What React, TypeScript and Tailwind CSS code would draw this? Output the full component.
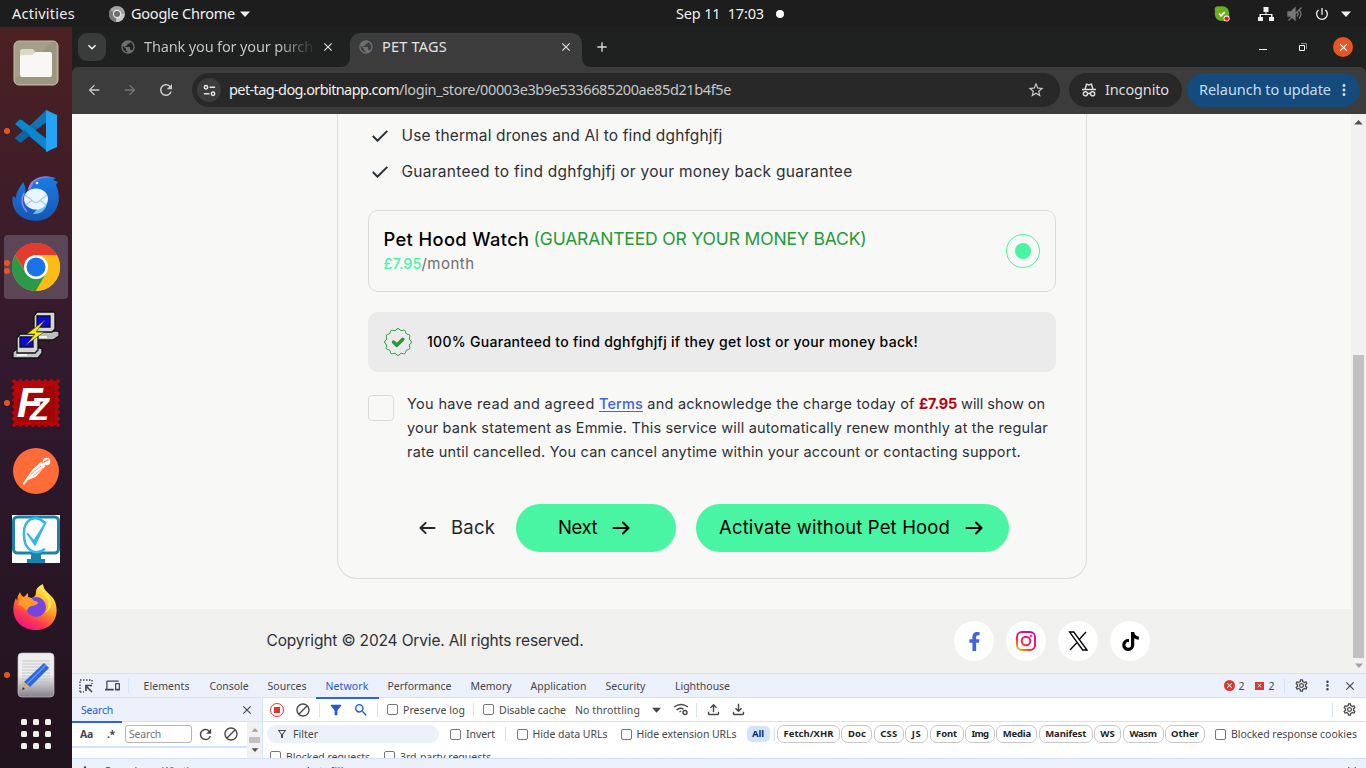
import React, { useLayoutEffect, useRef } from "react";
import { MdArrowBack, MdArrowForward, MdRefresh, MdStarBorder, MdFilterAlt, MdOutlineFilterAlt, MdSearch, MdOutlineSettings, MdMoreVert, MdClose, MdDoNotDisturb, MdKeyboardArrowDown, MdAdd, MdPublic, MdOutlineFileUpload, MdOutlineFileDownload, MdPowerSettingsNew, MdDevices } from "react-icons/md";
import { FaFacebookF, FaTiktok } from "react-icons/fa";

/** Single-line text whose tracking is adjusted so that it fills a given width. */
function Fit({ w, className = "", children }: { w: number; className?: string; children: React.ReactNode }) {
  const ref = useRef<HTMLSpanElement>(null);
  useLayoutEffect(() => {
    const el = ref.current;
    if (!el) return;
    el.style.letterSpacing = "0px";
    const n = (el.textContent || "").length;
    const natural = el.getBoundingClientRect().width;
    el.style.letterSpacing = `${(w - natural) / n}px`;
  }, [w]);
  return (
    <span className={`block shrink-0 whitespace-nowrap ${className}`} style={{ width: w }}>
      <span ref={ref} className="inline-block whitespace-pre">{children}</span>
    </span>
  );
}

function Caret({ className }: { className: string }) {
  return <svg viewBox="0 0 10 6" className={className}><path d="M0 .5h10L5 6z" fill="currentColor" /></svg>;
}

function TopBar() {
  return (
    <header className="flex h-[27px] shrink-0 items-center bg-[#1d1d1d] text-[14.5px] text-[#f0f0f0]">
      <Fit w={63} className="ml-3">Activities</Fit>
      <svg viewBox="0 0 16 16" className="ml-[34px] size-4">
        <circle cx="8" cy="8" r="8" fill="#a5a5a5" />
        <path d="M8 8 1 4a8 8 0 0 0 6 12z" fill="#777" />
        <path d="M8 8h7.5A8 8 0 0 1 7 16z" fill="#c9c9c9" />
        <circle cx="8" cy="8" r="4.2" fill="#e8e8e8" /><circle cx="8" cy="8" r="3" fill="#6b6b6b" />
      </svg>
      <Fit w={104} className="ml-[6px]">Google Chrome</Fit>
      <Caret className="ml-[5px] h-[6px] w-[10px]" />
      <Fit w={88} className="ml-[426px]">Sep 11  17:03</Fit>
      <span className="ml-[12px] size-2 rounded-full bg-white" />
      <svg viewBox="0 0 16 16" className="ml-[430px] size-4">
        <path d="M1 5C-.5 1 3-.5 6 .6c6-1.6 10 3 9 8 1.6 4-2 7.500-6 6.200C3 15.500 0 11 1 5z" fill="#6aae1c" />
        <path d="m5 7.500 2 2.200 3.800-3.500" stroke="#fff" strokeWidth="1.700" fill="none" />
        <circle cx="12.600" cy="12.600" r="3" fill="#fff" /><circle cx="12.600" cy="12.600" r="2.200" fill="#e01b24" />
      </svg>
      <svg viewBox="0 0 16 14" className="ml-[28px] h-[14px] w-4" fill="#f2f2f2">
        <path d="M5.500 0h5v5h-2v2h6v3H16v4h-5v-4h2V8H3v2h2v4H0v-4h1.500V7h6V5h-2z" />
      </svg>
      <svg viewBox="0 0 16 16" className="ml-[13px] size-4" fill="none" stroke="#777" strokeWidth="1.300">
        <path d="M1 6h3l4-4v12L4 10H1z" fill="#777" /><path d="M10 5.500q2 2.500 0 5M12 3.500q4 4.500 0 9M1.500 14.500l13-13" />
      </svg>
      <MdPowerSettingsNew className="ml-[11px] size-4" />
      <Caret className="ml-[11px] h-[6px] w-[10px]" />
    </header>
  );
}

const chromeIcon = (
  <svg viewBox="0 0 48 48" className="size-12">
    <circle cx="24" cy="24" r="24" fill="#fbbc14" />
    <path d="M24 24 3.200 12a24 24 0 0 1 41.600 0z" fill="#e33b2e" />
    <path d="M24 12H44.800A24 24 0 0 0 3.200 12L14 30z" fill="#e33b2e" />
    <path d="M3.200 12A24 24 0 0 0 24 48L34.400 30 24 24 13.600 30z" fill="#2b9a48" />
    <path d="M24 48a24 24 0 0 0 20.800-36H24l10.400 18z" fill="#fbbc14" />
    <circle cx="24" cy="24" r="12" fill="#fff" /><circle cx="24" cy="24" r="9.500" fill="#1a73e8" />
  </svg>
);

const filesIcon = (
  <svg viewBox="0 0 48 48" className="size-12">
    <rect x="2" y="2" width="44" height="44" rx="5" fill="#a59e88" stroke="#c5bfa9" />
    <path d="M3 40 40 3h4v42H4z" fill="#948c76" opacity=".5" />
    <path d="M8 12q0-2 2-2h11l3 4h12v10H8z" fill="#dcd8c9" />
    <path d="M8 18q0-2 2-2h10l4-3H38q2 0 2 2v21q0 2-2 2H10q-2 0-2-2z" fill="#f8f7f5" />
  </svg>
);

const codeIcon = (
  <svg viewBox="0 0 48 48" className="size-12">
    <path d="m3 31 5 4L36 14V3z" fill="#0d6cae" />
    <path d="m3 17 4-4q1-1 3 0l26 20v12z" fill="#0b87d0" />
    <path d="m3 31 4 4q1 1 3 0l8-7-6-5z" fill="#0d64a6" />
    <path d="M34 3 45 8v32l-11 5z" fill="#26a3f2" />
    <path d="M34 3 20 17l5 4 9-7z" fill="#1374b4" />
  </svg>
);

const mailIcon = (
  <svg viewBox="0 0 48 48" className="size-12">
    <defs><linearGradient id="bird" x1="0" y1="0" x2="0" y2="1"><stop stopColor="#1b7ce4" /><stop offset="1" stopColor="#1556b2" /></linearGradient></defs>
    <path d="M16 14C19 5 27 1 35 2l9 1-3 2 5 2-2 3c8 18-2 36-20 36C8 46-2 34 1 21l3 2C4 16 8 13 11 7q4 7 2 14z" fill="url(#bird)" />
    <path d="M12 18q-5 10 3 19" stroke="#8c86ec" strokeWidth="1.500" fill="none" />
    <path d="M16 14q2-9 12-12 8-2 14 1-13-2-20 4l-4 8z" fill="#9b7bea" />
    <path d="M35 29q-2 10-14 10l4-5z" fill="#69bffc" />
    <ellipse cx="24" cy="24" rx="12" ry="10.500" fill="#eaf5ff" />
    <path d="m13 20 9 7q2 1 4 0l9-7M14 30l6-5M34 30l-6-5" stroke="#a6cdee" strokeWidth="1.300" fill="none" />
    <circle cx="25" cy="8" r="1.300" fill="#fff" />
  </svg>
);

const puttyIcon = (
  <svg viewBox="0 0 48 48" className="size-12" stroke="#111" strokeWidth="1.300">
    <path d="m18 25 5-5h22l2 1v4l-6 4H20z" fill="#bdbdbd" /><path d="m22 5 3-4h17l1 1v16l-3 3H22z" fill="#d5d5d5" />
    <path d="M25 5h13v11H25z" fill="#0808e8" />
    <path d="m1 41 5-4h22l2 1v4l-4 5H1z" fill="#c8c8c8" /><path d="m5 27 3-4h17l1 1v15l-3 3H5z" fill="#d5d5d5" />
    <path d="M8 26h13v10H8z" fill="#0808e8" />
    <path d="M33 9 15 23h8L14 34l18-13h-8z" fill="#f8f000" stroke="#444" strokeWidth=".7" />
    <path d="M5 44h10m12-18h8" stroke="#fff" />
  </svg>
);

const ftpIcon = (
  <svg viewBox="0 0 48 48" className="size-12">
    <rect x="2" y="2" width="44" height="44" fill="#b50707" />
    <rect x="2" y="2" width="44" height="44" fill="none" stroke="#b50707" strokeWidth="4" strokeDasharray="0 6.280" strokeLinecap="round" />
    <path d="M5 43V20L43 5v38z" fill="#8e0303" opacity=".5" />
    <text x="5" y="38" fontSize="42" fontWeight="700" fontStyle="italic" fill="#fff" fontFamily="Liberation Sans, sans-serif">F<tspan x="18" y="41" fontSize="31">Z</tspan></text>
  </svg>
);

const postmanIcon = (
  <svg viewBox="0 0 48 48" className="size-12">
    <circle cx="24" cy="24" r="23" fill="#ff6c37" />
    <circle cx="34.500" cy="14.500" r="3.800" fill="#fff" /><path d="m31.500 15.500 5-3" stroke="#ff6c37" strokeWidth="1.200" />
    <path d="m29 15 4.500 4-10 11-7.500 3-4 5-1.500-1 5.500-8 5-7z" fill="#fff" />
    <path d="m19 27 10-8m-8 10 10-8" stroke="#ff6c37" strokeWidth=".7" />
  </svg>
);

const monitorIcon = (
  <svg viewBox="0 0 48 48" className="size-12">
    <path d="M0 0h48v48H0z" fill="#fff" /><rect x="1.500" y="2" width="45" height="36" rx="4" fill="none" stroke="#1b82ad" strokeWidth="3" />
    <path d="M19 39h10v5h4v4H15v-4h4z" fill="#1b82ad" />
    <path d="M33 8C21-3 11 7 12 20c0 14 10 22 21 14" fill="none" stroke="#35b6e8" strokeWidth="2.500" />
    <path d="m15 18 7 8L34 7 23 30z" fill="#35b6e8" stroke="#35b6e8" strokeWidth="1.500" />
  </svg>
);

const firefoxIcon = (
  <svg viewBox="0 0 48 48" className="size-12">
    <defs><linearGradient id="fox" x1=".8" y1="0" x2=".25" y2="1"><stop offset=".1" stopColor="#fff04a" /><stop offset=".45" stopColor="#ff9a25" /><stop offset=".75" stopColor="#ff3750" /><stop offset="1" stopColor="#e3148c" /></linearGradient></defs>
    <path d="M8 9q1 4 4 5l4-4v5q8 1 8-6 0-5 7-8c0 6 5 8 10 14 8 12 3 32-17 32C4 47-3 29 4 15l1 3q0-5 3-9z" fill="url(#fox)" />
    <circle cx="24" cy="24" r="10" fill="#7645df" />
    <path d="M12 14q7-1 10 4 4 0 4 2-2 3-7 3-3 1-4 5-5-6-9-6l3-7z" fill="#ff9b28" />
    <path d="M31 2q-1 7 4 13 4 8-2 15 8-4 6-13Q32 10 31 2z" fill="#ffe64c" />
  </svg>
);

const editorIcon = (
  <svg viewBox="0 0 48 48" className="size-12">
    <defs><linearGradient id="page" x1="0" y1="0" x2="0" y2="1"><stop offset=".5" stopColor="#eee" /><stop offset="1" stopColor="#84808a" /></linearGradient></defs>
    <rect x="6" y="2" width="36" height="44" rx="4" fill="url(#page)" stroke="#bbb" strokeWidth=".7" />
    <path d="M10 10h28M10 13h28M10 16h28M10 19h28M10 22h28M10 25h28M10 28h28M10 31h28M10 34h28" stroke="#bdbdbd" strokeWidth=".8" />
    <path d="m32 12 5 5-19 19-6-5z" fill="#2b66dc" /><path d="m34 14-19 19" stroke="#6795ef" strokeWidth="1.500" />
    <path d="m12 31 6 5-7 3z" fill="#d9aa78" /><path d="m11 36 2 2-3 1z" fill="#333" />
  </svg>
);

const apps: { icon: React.ReactNode; dots: number; active?: boolean }[] = [
  { icon: filesIcon, dots: 0 }, { icon: codeIcon, dots: 1 }, { icon: mailIcon, dots: 0 },
  { icon: chromeIcon, dots: 2, active: true }, { icon: puttyIcon, dots: 0 }, { icon: ftpIcon, dots: 1 },
  { icon: postmanIcon, dots: 0 }, { icon: monitorIcon, dots: 0 }, { icon: firefoxIcon, dots: 0 }, { icon: editorIcon, dots: 1 },
];

function Dock() {
  return (
    <nav className="flex w-[72px] shrink-0 flex-col bg-linear-to-b from-[#4b2122] via-[#30182e] via-50% to-[#21131c] pt-[2px]">
      {apps.map((a, i) => (
        <div key={i} className="flex h-[68px] shrink-0 items-center">
          <div className={`ml-1 flex h-16 w-16 items-center rounded-[4px] ${a.active ? "bg-[#5c4556]" : ""}`}>
            <div className="flex w-2 flex-col items-center gap-[2px] pr-[2px]">
              {Array.from({ length: a.dots }, (_, d) => <span key={d} className="size-[6px] rounded-full bg-[#e95420]" />)}
            </div>
            {a.icon}
          </div>
        </div>
      ))}
      <div className="mt-[10px] ml-[21px] grid w-[30px] grid-cols-3 gap-[6px]">
        {Array.from({ length: 9 }, (_, i) => <span key={i} className="size-[6px] rounded-[1.500px] bg-[#efefec]" />)}
      </div>
    </nav>
  );
}

function TabStrip() {
  return (
    <div className="flex h-10 shrink-0 bg-[#1f2120] text-[14.500px] text-[#c8caca]">
      <div className="mt-[6px] ml-[6px] flex h-7 w-7 items-center justify-center rounded-[9px] bg-[#3a3b3b]">
        <MdKeyboardArrowDown className="size-4 text-white" />
      </div>
      <div className="ml-[14px] flex items-center">
        <MdPublic className="size-4 text-[#6b7074]" />
        <Fit w={169} className="ml-2 overflow-hidden bg-linear-to-r from-[#c8caca] from-80% to-[#303232] bg-clip-text text-transparent">Thank you for your purch</Fit>
        <MdClose className="ml-[8px] size-[14px] text-[#dedede]" />
      </div>
      <svg viewBox="0 0 10 10" className="mt-[30px] ml-[5px] size-[10px]"><path d="M10 0v10H0Q10 10 10 0z" fill="#3c3c3c" /></svg>
      <div className="mt-[6px] flex w-[232px] items-center rounded-t-[10px] bg-[#3c3c3c] pb-[6px] text-[#e3e3e3]">
        <MdPublic className="ml-2 size-4 text-[#6b7074]" />
        <Fit w={65} className="ml-2">PET TAGS</Fit>
        <MdClose className="ml-[112px] size-[14px]" />
      </div>
      <svg viewBox="0 0 10 10" className="mt-[30px] size-[10px]"><path d="M0 0v10h10Q0 10 0 0z" fill="#3c3c3c" /></svg>
      <div className="flex flex-1 items-center">
        <MdAdd className="ml-[2px] size-4 text-[#dedede]" />
        <span className="ml-[649px] h-px w-2 translate-y-[2px] bg-white" />
        <svg viewBox="0 0 8 8" className="ml-[32px] size-2"><path d="M2 .5h5.500V6" fill="none" stroke="#888" /><path d="M.5 2.500h5v5h-5z" fill="none" stroke="#fff" /></svg>
        <span className="ml-[26px] flex size-5 items-center justify-center rounded-full bg-[#e95420]"><MdClose className="size-[13px] text-white" /></span>
      </div>
    </div>
  );
}

function Toolbar() {
  return (
    <div className="bg-[#1f2120]">
      <div className="flex h-[47px] items-center rounded-t-[6px] bg-[#3c3c3c] pb-px text-[14.500px]">
        <MdArrowBack className="ml-[14px] size-4 text-[#c9c9c9]" />
        <MdArrowForward className="ml-[20px] size-4 text-[#777]" />
        <MdRefresh className="ml-[19px] size-[18px] text-[#c9c9c9]" />
        <div className="ml-[17px] flex h-[34px] w-[868px] items-center rounded-full bg-[#282828]">
          <span className="ml-[5px] flex size-6 items-center justify-center rounded-full bg-[#3c3c3c]">
            <svg viewBox="0 0 14 14" className="size-[13px]" fill="none" stroke="#e3e3e3" strokeWidth="1.600"><circle cx="3.200" cy="3.500" r="1.800" /><path d="M7 3.500h6M1 10.500h6" /><circle cx="10.800" cy="10.500" r="1.800" /></svg>
          </span>
          <div className="ml-2 flex">
            <Fit w={170} className="text-[#f0f0f0]">pet-tag-dog.orbitnapp.com</Fit>
            <Fit w={332} className="text-[#c4c7c5]">/login_store/00003e3b9e5336685200ae85d21b4f5e</Fit>
          </div>
          <MdStarBorder className="ml-[296px] size-[18px] text-[#c9c9c9]" />
        </div>
        <div className="ml-[9px] flex h-[34px] w-[113px] items-center rounded-full bg-[#282828] text-[#dedede]">
          <svg viewBox="0 0 14 14" className="ml-[13px] size-[14px]" fill="none" stroke="currentColor" strokeWidth="1.400"><path d="M3.200 6 4.500 1.200 7 2l2.500-.8L10.800 6M0 6.500h14M5.500 10.800q1.500-1 3 0" /><circle cx="3.400" cy="10.800" r="2.100" /><circle cx="10.600" cy="10.800" r="2.100" /></svg>
          <Fit w={64} className="ml-[9px]">Incognito</Fit>
        </div>
        <div className="ml-[5px] flex h-[34px] w-[173px] items-center rounded-full bg-[#144a7c] text-[#c2dff8]">
          <Fit w={132} className="ml-3">Relaunch to update</Fit>
          <MdMoreVert className="ml-[4px] size-[18px]" />
        </div>
      </div>
    </div>
  );
}

function Arrow({ className }: { className: string }) {
  return <svg viewBox="0 0 18 14" className={className} fill="none" stroke="currentColor" strokeWidth="2" strokeLinecap="round" strokeLinejoin="round"><path d="M1.500 7h15M11 1.500 16.500 7 11 12.500" /></svg>;
}

function Feature({ w, children }: { w: number; children: string }) {
  return (
    <div className="flex h-9 items-center">
      <svg viewBox="0 0 16 12" className="ml-[33.500px] h-3 w-4" fill="none" stroke="#263238" strokeWidth="2"><path d="m.8 6 4.700 4.700L15.300.9" /></svg>
      <Fit w={w} className="ml-[14px] text-[15.500px] text-[#2f3035]">{children}</Fit>
    </div>
  );
}

const sealPoints = Array.from({ length: 72 }, (_, i) => {
  const t = (i / 72) * Math.PI * 2;
  const r = 12.600 + 0.900 * Math.cos(t * 12);
  return `${(14 + r * Math.sin(t)).toFixed(2)},${(14 - r * Math.cos(t)).toFixed(2)}`;
}).join(" ");

function Card() {
  return (
    <section className="ml-[265px] h-[465px] w-[750px] rounded-b-[20px] border border-t-0 border-[#dcdcdb] pt-[4px]">
      <Feature w={321}>Use thermal drones and Al to find dghfghjfj</Feature>
      <Feature w={451}>Guaranteed to find dghfghjfj or your money back guarantee</Feature>
      <div className="mt-5 ml-[30px] flex h-[82px] w-[688px] items-center justify-between rounded-[10px] border border-[#dcdcdb] pr-[15px] pl-[14.500px]">
        <div className="pb-[1px]">
          <div className="flex h-[26px] text-[17.500px] leading-[26px]">
            <Fit w={146} className="text-[18.300px] font-medium text-black">Pet Hood Watch</Fit>
            <Fit w={333} className="ml-1 text-[#249a39]">(GUARANTEED OR YOUR MONEY BACK)</Fit>
          </div>
          <div className="flex h-6 text-[14.500px] leading-6">
            <Fit w={38} className="font-medium text-[#49f5a2]">£7.95</Fit>
            <Fit w={53} className="text-[15px] text-[#6d6d6d]">/month</Fit>
          </div>
        </div>
        <span className="flex size-[34px] items-center justify-center rounded-full border border-[#49f5a2]"><span className="size-4 rounded-full bg-[#49f5a2]" /></span>
      </div>
      <div className="mt-5 ml-[30px] flex h-[60px] w-[688px] items-center rounded-[10px] bg-[#ebebeb]">
        <svg viewBox="0 0 28 28" className="ml-4 size-7"><polygon points={sealPoints} fill="none" stroke="#249a39" /><path d="m9.500 14 3.300 3.300 6-6" fill="none" stroke="#249a39" strokeWidth="3.500" strokeLinecap="round" strokeLinejoin="round" /></svg>
        <Fit w={491} className="ml-[15px] pb-px text-[14px] font-medium text-black">100% Guaranteed to find dghfghjfj if they get lost or your money back!</Fit>
      </div>
      <div className="mt-5 ml-[30px] flex text-[14.500px] leading-6 text-[#2f3035]">
        <span className="mt-[3px] h-[26px] w-[26px] rounded-[4px] border border-[#dcdcdb]" />
        <div className="ml-[13px]">
          <div className="flex">
            <Fit w={192}>{"You have read and agreed "}</Fit>
            <Fit w={44} className="font-medium text-[#4363d8]"><span className="underline underline-offset-2">Terms</span></Fit>
            <Fit w={276}>{" and acknowledge the charge today of "}</Fit>
            <Fit w={38} className="font-bold text-[#b9000f]">£7.95</Fit>
            <Fit w={88}>{" will show on"}</Fit>
          </div>
          <Fit w={641}>your bank statement as Emmie. This service will automatically renew monthly at the regular</Fit>
          <Fit w={614}>rate until cancelled. You can cancel anytime within your account or contacting support.</Fit>
        </div>
      </div>
      <div className="mt-[40px] ml-[81px] flex h-12 items-center text-[18.500px] text-[#23262b]">
        <Arrow className="h-[14px] w-[17px] rotate-180" />
        <Fit w={44} className="ml-[15px]">Back</Fit>
        <div className="ml-[21px] flex h-12 w-[160px] items-center rounded-full bg-[#49f5a2] text-black">
          <Fit w={39} className="ml-[42px]">Next</Fit><Arrow className="ml-[15px] h-[14px] w-[18px]" />
        </div>
        <div className="ml-5 flex h-12 w-[313px] items-center rounded-full bg-[#49f5a2] text-black">
          <Fit w={231} className="ml-[23px]">Activate without Pet Hood</Fit><Arrow className="ml-[15px] h-[14px] w-[18px]" />
        </div>
      </div>
    </section>
  );
}

function Social({ children }: { children: React.ReactNode }) {
  return <span className="flex size-10 items-center justify-center rounded-full bg-white">{children}</span>;
}

function WebPage() {
  return (
    <main className="flex h-[559px] shrink-0 bg-[#f8f8f7] font-['Inter',sans-serif]">
      <div className="w-[1279px]">
        <Card />
        <footer className="mt-[30px] flex h-16 items-center bg-[#f0f0ee]">
          <Fit w={317} className="ml-[194.500px] text-[15.500px] text-[#2f3035]">Copyright © 2024 Orvie. All rights reserved.</Fit>
          <div className="ml-[370.500px] flex gap-3">
            <Social><FaFacebookF className="size-[19px] text-[#4363d8]" /></Social>
            <Social>
              <svg viewBox="0 0 20 20" className="size-5" fill="none" stroke="url(#insta)" strokeWidth="1.900">
                <defs><linearGradient id="insta" gradientUnits="userSpaceOnUse" x1="2" y1="20" x2="16" y2="1"><stop stopColor="#ffc400" /><stop offset=".4" stopColor="#ff1b35" /><stop offset="1" stopColor="#d500c5" /></linearGradient></defs>
                <rect x="1" y="1" width="18" height="18" rx="5" /><circle cx="10" cy="10" r="4.300" /><circle cx="15" cy="5" r=".4" />
              </svg>
            </Social>
            <Social><svg viewBox="0 0 20 20" className="size-5" fill="none" stroke="#000" strokeWidth="1.300"><path d="M1.500 1h4.300L19 19h-4.300zM18 1l-7.300 8M9 11.500 2 19" /></svg></Social>
            <Social><FaTiktok className="size-[19px] text-black" /></Social>
          </div>
        </footer>
      </div>
      <div className="flex w-[15px] flex-col items-center bg-[#f1f1f1]">
        <Caret className="mt-[6px] h-[5px] w-[9px] rotate-180 text-[#505050]" />
        <span className="mt-[230px] h-[303px] w-[11px] bg-[#c1c1c1]" />
        <Caret className="mt-[5px] h-[5px] w-[8px] text-[#a3a3a3]" />
      </div>
    </main>
  );
}

function Box({ className = "" }: { className?: string }) {
  return <span className={`size-[11px] shrink-0 rounded-[2px] border border-[#767676] bg-white ${className}`} />;
}
function Bar({ className = "" }: { className?: string }) {
  return <span className={`h-[14px] w-px shrink-0 bg-[#d3e3fd] ${className}`} />;
}

const panels = [
  { t: "Elements", w: 46, m: "ml-[14.500px]" }, { t: "Console", w: 39, m: "ml-[20px]" }, { t: "Sources", w: 39, m: "ml-[19px]" },
  { t: "Network", w: 43, m: "ml-[19px]" }, { t: "Performance", w: 64, m: "ml-[19px]" }, { t: "Memory", w: 41, m: "ml-[19px]" },
  { t: "Application", w: 56, m: "ml-[19px]" }, { t: "Security", w: 40, m: "ml-[19px]" }, { t: "Lighthouse", w: 55, m: "ml-[29.500px]" },
];

const pills = [
  { t: "Fetch/XHR", w: 50, box: "w-[63px]" }, { t: "Doc", w: 18, box: "w-[31px]" }, { t: "CSS", w: 17, box: "w-[30px]" },
  { t: "JS", w: 10, box: "w-[23px]" }, { t: "Font", w: 21, box: "w-[34px]" }, { t: "Img", w: 17, box: "w-[30px]" },
  { t: "Media", w: 28, box: "w-[41px]" }, { t: "Manifest", w: 41, box: "w-[54px]" }, { t: "WS", w: 15, box: "w-[27px]" },
  { t: "Wasm", w: 27, box: "w-[41px]" }, { t: "Other", w: 28, box: "w-[40px]" },
];

function DevTools() {
  return (
    <section className="flex h-[95px] shrink-0 flex-col overflow-hidden border-t border-[#d3e3fd] bg-white text-[10.500px] leading-[14px] text-[#474747]">
      <div className="flex h-[24px] shrink-0 items-center border-b border-[#d3e3fd] bg-[#ecf0fa]">
        <svg viewBox="0 0 14 14" className="ml-[7px] size-[14px]" fill="none" stroke="#474747" strokeWidth="1.400"><path d="M1 13V1h12v4M1 13h4" strokeDasharray="1.500 1.500" /><path d="m13 13-6-6M7 12V6.500h6" strokeWidth="1.700" /></svg>
        <MdDevices className="ml-[12px] size-[15px]" />
        <Bar className="ml-[8px]" />
        {panels.map((p) => (
          <div key={p.t} className={`flex h-[24px] items-center ${p.m} ${p.t === "Network" ? "relative text-[#1f5bd6] after:absolute after:-inset-x-[10px] after:-bottom-px after:h-[2px] after:bg-[#2962f0]" : ""}`}>
            <Fit w={p.w}>{p.t}</Fit>
          </div>
        ))}
        <span className="ml-[493.500px] flex size-[11px] items-center justify-center rounded-full bg-[#dc362e] text-white"><MdClose className="size-[9px]" /></span>
        <Fit w={6} className="ml-[4px]">2</Fit>
        <span className="ml-[10px] flex h-[8px] w-[9px] items-center justify-center bg-[#dc362e] text-white"><MdClose className="size-[7px]" /></span>
        <Fit w={6} className="ml-[5px]">2</Fit>
        <Bar className="ml-[9px]" />
        <MdOutlineSettings className="ml-[9px] size-[15px]" />
        <MdMoreVert className="ml-[11px] size-[15px]" />
        <MdClose className="ml-[8px] size-[14px]" />
      </div>
      <div className="flex h-[60px] shrink-0">
        <aside className="flex w-[191px] shrink-0 flex-col border-r border-[#d3e3fd]">
          <div className="flex h-6 shrink-0 items-center border-b border-[#d3e3fd] bg-[#ecf0fa]">
            <div className="relative flex h-6 w-[50px] items-center pl-[9px] text-[#1f5bd6] after:absolute after:inset-x-0 after:-bottom-px after:h-[2px] after:bg-[#2962f0]"><Fit w={32}>Search</Fit></div>
            <MdClose className="ml-[118px] size-[14px]" />
          </div>
          <div className="flex flex-1">
            <div className="flex h-[26px] w-[175px] items-center border-b-2 border-[#d3e3fd]">
              <Fit w={13} className="ml-2 font-bold">Aa</Fit>
              <Fit w={8} className="ml-[14px] font-bold">.*</Fit>
              <div className="ml-[10px] flex h-[18px] w-[67px] items-center rounded-[3px] border border-[#b5b5b5] pl-[3px] text-[#757575]"><Fit w={32}>Search</Fit></div>
              <MdRefresh className="ml-[5px] size-[17px]" />
              <MdDoNotDisturb className="ml-[9px] size-4 -scale-x-100" />
            </div>
            <div className="flex flex-1 flex-col items-center bg-[#f1f1f1] pt-[6px]">
              <Caret className="h-[4px] w-[8px] rotate-180 text-[#a3a3a3]" />
              <span className="mt-[5px] h-[6px] w-[11px] bg-[#c1c1c1]" />
              <Caret className="mt-[5px] h-[4px] w-[8px] text-[#505050]" />
            </div>
          </div>
        </aside>
        <div className="min-w-0 flex-1 overflow-hidden">
          <div className="flex h-6 items-center border-b border-[#d3e3fd]">
            <span className="ml-[7px] flex size-[14px] items-center justify-center rounded-full border-[1.500px] border-[#dc362e]"><span className="size-[6px] bg-[#dc362e]" /></span>
            <MdDoNotDisturb className="ml-[11px] size-4 -scale-x-100" />
            <Bar className="ml-[8px]" />
            <MdFilterAlt className="ml-[8px] size-4 text-[#1f5bd6]" />
            <MdSearch className="ml-[9px] size-4 text-[#1f5bd6]" />
            <Bar className="ml-[8px]" />
            <Box className="ml-[9px]" /><Fit w={62} className="ml-[5px]">Preserve log</Fit>
            <Bar className="ml-[8px]" />
            <Box className="ml-[9px]" /><Fit w={67} className="ml-[5px]">Disable cache</Fit>
            <Fit w={65} className="ml-[9px]">No throttling</Fit>
            <Caret className="ml-[12px] h-[6px] w-[9px]" />
            <svg viewBox="0 0 16 13" className="ml-[12px] h-[13px] w-4" fill="none" stroke="#474747" strokeWidth="1.400"><path d="M1 4q7-5 14 0M3.500 7q3.500-3 7-.7M6.500 9l1.500-1" /><circle cx="12" cy="9.500" r="2" /></svg>
            <Bar className="ml-[7px]" />
            <MdOutlineFileUpload className="ml-[8px] size-[17px]" />
            <MdOutlineFileDownload className="ml-[8px] size-[17px]" />
            <Bar className="ml-[585px]" />
            <MdOutlineSettings className="ml-[9px] size-[15px]" />
          </div>
          <div className="flex h-6 items-center">
            <div className="ml-1 flex h-[18px] w-[172px] items-center rounded-full bg-[#ecf0fa]"><MdOutlineFilterAlt className="ml-[9px] size-3" /><Fit w={25} className="ml-[5px]">Filter</Fit></div>
            <Box className="ml-[11px]" /><Fit w={29} className="ml-[5px]">Invert</Fit>
            <Bar className="ml-[10px]" />
            <Box className="ml-[10.500px]" /><Fit w={75} className="ml-[5px]">Hide data URLs</Fit>
            <Box className="ml-[13px]" /><Fit w={100} className="ml-[5px]">Hide extension URLs</Fit>
            <span className="ml-[10px] flex h-4 w-[23px] items-center justify-center rounded-[5px] bg-[#d3e3fd] text-[9.500px] font-bold text-[#062e6f]"><Fit w={12}>All</Fit></span>
            <Bar className="ml-[4px]" />
            <div className="ml-[2.500px] flex gap-[1.400px] text-[9.500px] font-bold text-[#1f1f1f]">
              {pills.map((p) => <span key={p.t} className={`flex h-[18px] shrink-0 items-center justify-center rounded-[7px] border border-[#c7c7c7] ${p.box}`}><Fit w={p.w}>{p.t}</Fit></span>)}
            </div>
            <Box className="ml-[10px]" /><Fit w={126} className="ml-[5px]">Blocked response cookies</Fit>
          </div>
          <div className="flex h-6 items-start">
            <Box className="mt-[5px] ml-[7px]" /><Fit w={84} className="mt-[4px] ml-[5px]">Blocked requests</Fit>
            <Box className="mt-[5px] ml-[14px]" /><Fit w={91} className="mt-[4px] ml-[5px]">3rd-party requests</Fit>
          </div>
        </div>
      </div>
      <div className="flex h-[24px] shrink-0 items-start border-t border-[#d3e3fd] bg-[#ecf0fa] pt-[5px]">
        <MdMoreVert className="ml-[6px] size-[14px]" />
        <Fit w={39} className="ml-[12px]">Console</Fit>
        <Fit w={52} className="ml-[19px] text-[#1f5bd6]">What's new</Fit>
        <Fit w={39} className="ml-[91px]">Autofill</Fit>
        <MdClose className="ml-[1001px] size-[14px]" />
      </div>
    </section>
  );
}

export default function App() {
  return (
    <div className="flex h-[768px] w-[1366px] flex-col overflow-hidden font-['Noto_Sans',sans-serif]">
      <TopBar />
      <div className="flex h-[741px]">
        <Dock />
        <div className="flex w-[1294px] flex-col">
          <TabStrip />
          <Toolbar />
          <WebPage />
          <DevTools />
        </div>
      </div>
    </div>
  );
}
